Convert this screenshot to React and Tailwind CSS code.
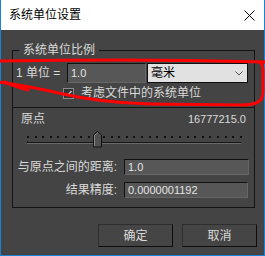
import React from 'react';

const ticks = Array.from({ length: 29 }, (_, i) => Math.round(14 + i * 7.6));

function Slider() {
  return (
    <svg width="241" height="18" viewBox="0 0 241 18" className="mt-[3px] block">
      {ticks.map((x) => (
        <rect key={x} x={x} y="6" width="2" height="2" fill="#111" />
      ))}
      <rect x="14" y="12" width="214" height="1" fill="#151515" />
      <rect x="14" y="13" width="214" height="1" fill="#6a6a6a" />
      <rect x="14" y="11" width="1" height="2" fill="#151515" />
      <polygon points="80.5,17 80.5,5 84.5,1.5 88.5,5 88.5,17" fill="#505050" stroke="#111" strokeWidth="1" />
      <polyline points="81.5,16 81.5,5.5 84.5,2.8" fill="none" stroke="#8a8a8a" strokeWidth="1" />
    </svg>
  );
}

export default function App() {
  return (
    <div className="relative flex h-[256px] w-[265px] flex-col border-x border-b border-[#1883d7] bg-[#444444] font-['Liberation_Sans','Noto_Sans_CJK_SC',sans-serif] text-[12px] text-[#dadada]">
      <div className="flex h-[30px] shrink-0 items-center justify-between bg-white pl-[8px] pr-[9px] text-black">
        <span className="leading-none">系统单位设置</span>
        <svg width="11" height="11" viewBox="0 0 11 11">
          <path d="M0.5 0.5 L10.5 10.5 M10.5 0.5 L0.5 10.5" stroke="#000" strokeWidth="1" />
        </svg>
      </div>

      <fieldset className="ml-[11px] mt-[12px] w-[243px] border border-[#141414] pb-[9px]">
        <legend className="ml-[6px] px-[4px] leading-[16px]">系统单位比例</legend>

        <div className="mt-[5px] flex h-[20px] items-center pl-[3px]">
          <span className="w-[51px] leading-none">1 单位 =</span>
          <div className="flex h-[20px] w-[79px] items-center border border-b-[#666] border-l-[#111] border-r-[#666] border-t-[#111] bg-[#575757] pl-[3px] text-[11px] text-[#e4e4e4]">
            1.0
          </div>
          <div className="ml-[1px] flex h-[20px] w-[101px] items-center justify-between border border-[#0f0f0f] bg-[#e1e1e1] pl-[3px] pr-[4px] text-black">
            <span className="leading-none">毫米</span>
            <svg width="8" height="5" viewBox="0 0 8 5">
              <polyline points="0.5,0.5 4,4 7.5,0.5" fill="none" stroke="#555" strokeWidth="1" />
            </svg>
          </div>
        </div>

        <div className="mt-[2px] flex h-[16px] items-center pl-[50px]">
          <div className="flex h-[11px] w-[11px] items-center justify-center border border-[#8a8a8a] bg-[#333]">
            <svg width="9" height="9" viewBox="0 0 9 9">
              <polyline points="1.5,4.5 3.5,6.5 7.5,2" fill="none" stroke="#c4c4c4" strokeWidth="1.5" />
            </svg>
          </div>
          <span className="ml-[7px] leading-none">考虑文件中的系统单位</span>
        </div>

        <div className="mt-[6px] border-t border-[#141414]">
          <div className="mt-[3px] flex h-[16px] items-center justify-between px-[8px]">
            <span className="leading-none">原点</span>
            <span className="text-[11px] leading-none">16777215.0</span>
          </div>

          <Slider />

          <div className="mt-[11px] flex h-[16px] items-center">
            <span className="w-[104px] text-right leading-none">与原点之间的距离:</span>
            <div className="ml-[7px] flex h-[16px] w-[125px] items-center border border-b-[#666] border-l-[#111] border-r-[#666] border-t-[#111] bg-[#575757] pl-[3px] text-[11px] text-[#e4e4e4]">
              1.0
            </div>
          </div>

          <div className="mt-[7px] flex h-[16px] items-center">
            <span className="w-[104px] text-right leading-none">结果精度:</span>
            <div className="ml-[7px] flex h-[16px] w-[124px] items-center border border-b-[#666] border-l-[#111] border-r-[#666] border-t-[#111] bg-[#575757] pl-[3px] text-[11px] text-[#e4e4e4]">
              0.0000001192
            </div>
          </div>
        </div>
      </fieldset>

      <div className="mt-[16px] flex justify-end gap-[9px] pr-[7px]">
        <button className="flex h-[23px] w-[75px] items-center justify-center border border-b-[#0e0e0e] border-l-[#2e2e2e] border-r-[#0e0e0e] border-t-[#2e2e2e] bg-[#454545] text-[#dadada]">
          确定
        </button>
        <button className="flex h-[23px] w-[75px] items-center justify-center border border-b-[#0e0e0e] border-l-[#2e2e2e] border-r-[#0e0e0e] border-t-[#2e2e2e] bg-[#454545] text-[#dadada]">
          取消
        </button>
      </div>

      <svg className="pointer-events-none absolute left-[-1px] top-0" width="265" height="256" viewBox="0 0 265 256">
        <g fill="none" stroke="#f00" strokeWidth="3" strokeLinecap="round" strokeLinejoin="round">
          <path d="M -3 61 C 80 59.5, 180 59.5, 267 62" />
          <path d="M -3 82 C 15 84, 40 89, 63 94 C 85 99, 110 103, 150 104 L 240 105 C 258 105, 263 101, 263 92 L 263 70 C 263 65, 262 63, 259 62" />
          <path d="M 4 82 C 12 85, 20 88, 28 90" />
        </g>
      </svg>
    </div>
  );
}
